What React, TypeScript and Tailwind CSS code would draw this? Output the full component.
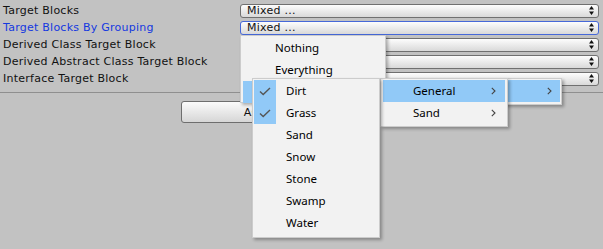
import React from 'react';

const labels = [
  'Target Blocks',
  'Target Blocks By Grouping',
  'Derived Class Target Block',
  'Derived Abstract Class Target Block',
  'Interface Target Block',
];

const blocks = ['Dirt', 'Grass', 'Sand', 'Snow', 'Stone', 'Swamp', 'Water'];
const checked = ['Dirt', 'Grass'];

const UpDown = () => (
  <svg width="5" height="9" viewBox="0 0 5 9" className="shrink-0">
    <path d="M2.5 0 L5 3.5 L0 3.5 Z M2.5 9 L5 5.5 L0 5.5 Z" fill="#111" />
  </svg>
);

const Chevron = () => (
  <svg width="5" height="8" viewBox="0 0 5 8">
    <polyline points="0.8,0.8 4,4 0.8,7.2" fill="none" stroke="#444" strokeWidth="1.1" />
  </svg>
);

const Check = () => (
  <svg width="12" height="9" viewBox="0 0 12 9">
    <polyline points="1,4.5 4.2,7.5 11,1" fill="none" stroke="#555" strokeWidth="1.4" />
  </svg>
);

const menuFont = { fontFamily: '"Noto Sans", "Open Sans", Arial, sans-serif' };

export default function App() {
  return (
    <div
      className="relative w-[603px] h-[249px] overflow-hidden bg-[#c2c2c2] text-[11px] text-[#111] tracking-[0.25px]"
      style={{ fontFamily: '"DejaVu Sans", Verdana, sans-serif' }}
    >
      {/* Inspector rows */}
      <div className="pt-[2px]">
        {labels.map((label, i) => (
          <div key={label} className="flex items-center h-[17px]">
            <div className={`w-[240px] pl-[3px] leading-none ${i === 1 ? 'text-[#1438e0]' : ''}`}>{label}</div>
            <div
              className={`flex items-center justify-between w-[359px] h-[14px] pl-[6px] pr-[4px] rounded-[3px] border bg-gradient-to-b from-[#fdfdfd] to-[#d9d9d9] ${
                i === 1 ? 'border-[#4668d8]' : 'border-[#707070]'
              }`}
            >
              <span className="leading-none">{i < 2 ? 'Mixed ...' : ''}</span>
              <UpDown />
            </div>
          </div>
        ))}
      </div>

      <div className="mt-[5px] h-px bg-[#8f8f8f]" />

      <div className="flex justify-center mt-[8px]">
        <button className="w-[241px] h-[22px] pl-[2px] rounded-[3px] border border-[#6e6e6e] bg-gradient-to-b from-[#fbfbfb] to-[#d6d6d6] text-[11px] leading-none">
          Assign Target Blocks
        </button>
      </div>

      {/* Menu level 1 */}
      <div
        className="absolute left-[240px] top-[35px] w-[146px] h-[68px] bg-[#f2f2f2] border border-[#cccccc] pl-[2px] pr-[2px] pt-px shadow-[2px_2px_3px_rgba(0,0,0,0.3)] text-[11.5px] tracking-normal text-black"
        style={menuFont}
      >
        <div className="h-[22px] flex items-center pl-[32px]">Nothing</div>
        <div className="h-[22px] flex items-center pl-[32px]">Everything</div>
        <div className="h-[22px] bg-[#91c9f7]" />
      </div>

      {/* Menu level 2 */}
      <div className="absolute left-[383px] top-[78px] w-[179px] h-[27px] bg-[#f2f2f2] border border-[#cccccc] px-px pt-px shadow-[2px_2px_3px_rgba(0,0,0,0.3)]">
        <div className="h-[22px] flex items-center justify-end pr-[8px] bg-[#91c9f7]">
          <Chevron />
        </div>
      </div>

      {/* Menu level 3 */}
      <div
        className="absolute left-[380px] top-[78px] w-[128px] h-[49px] bg-[#f2f2f2] border border-[#cccccc] pl-[2px] pr-[2px] pt-px shadow-[2px_2px_3px_rgba(0,0,0,0.3)] text-[11.5px] tracking-normal text-black"
        style={menuFont}
      >
        <div className="h-[22px] flex items-center justify-between pl-[30px] pr-[9px] bg-[#91c9f7]">
          <span>General</span>
          <Chevron />
        </div>
        <div className="h-[22px] flex items-center justify-between pl-[30px] pr-[9px]">
          <span>Sand</span>
          <Chevron />
        </div>
      </div>

      {/* Menu level 4 */}
      <div
        className="absolute left-[252px] top-[78px] w-[128px] h-[160px] bg-[#f2f2f2] border border-[#cccccc] pl-px pt-px shadow-[2px_2px_3px_rgba(0,0,0,0.3)] text-[11.5px] tracking-normal text-black"
        style={menuFont}
      >
        {blocks.map((b) => (
          <div key={b} className="h-[22px] flex items-center">
            <div
              className={`w-[22px] h-full flex items-center justify-center ${
                checked.includes(b) ? 'bg-[#91c9f7]' : ''
              }`}
            >
              {checked.includes(b) && <Check />}
            </div>
            <span className="pl-[10px]">{b}</span>
          </div>
        ))}
      </div>
    </div>
  );
}
